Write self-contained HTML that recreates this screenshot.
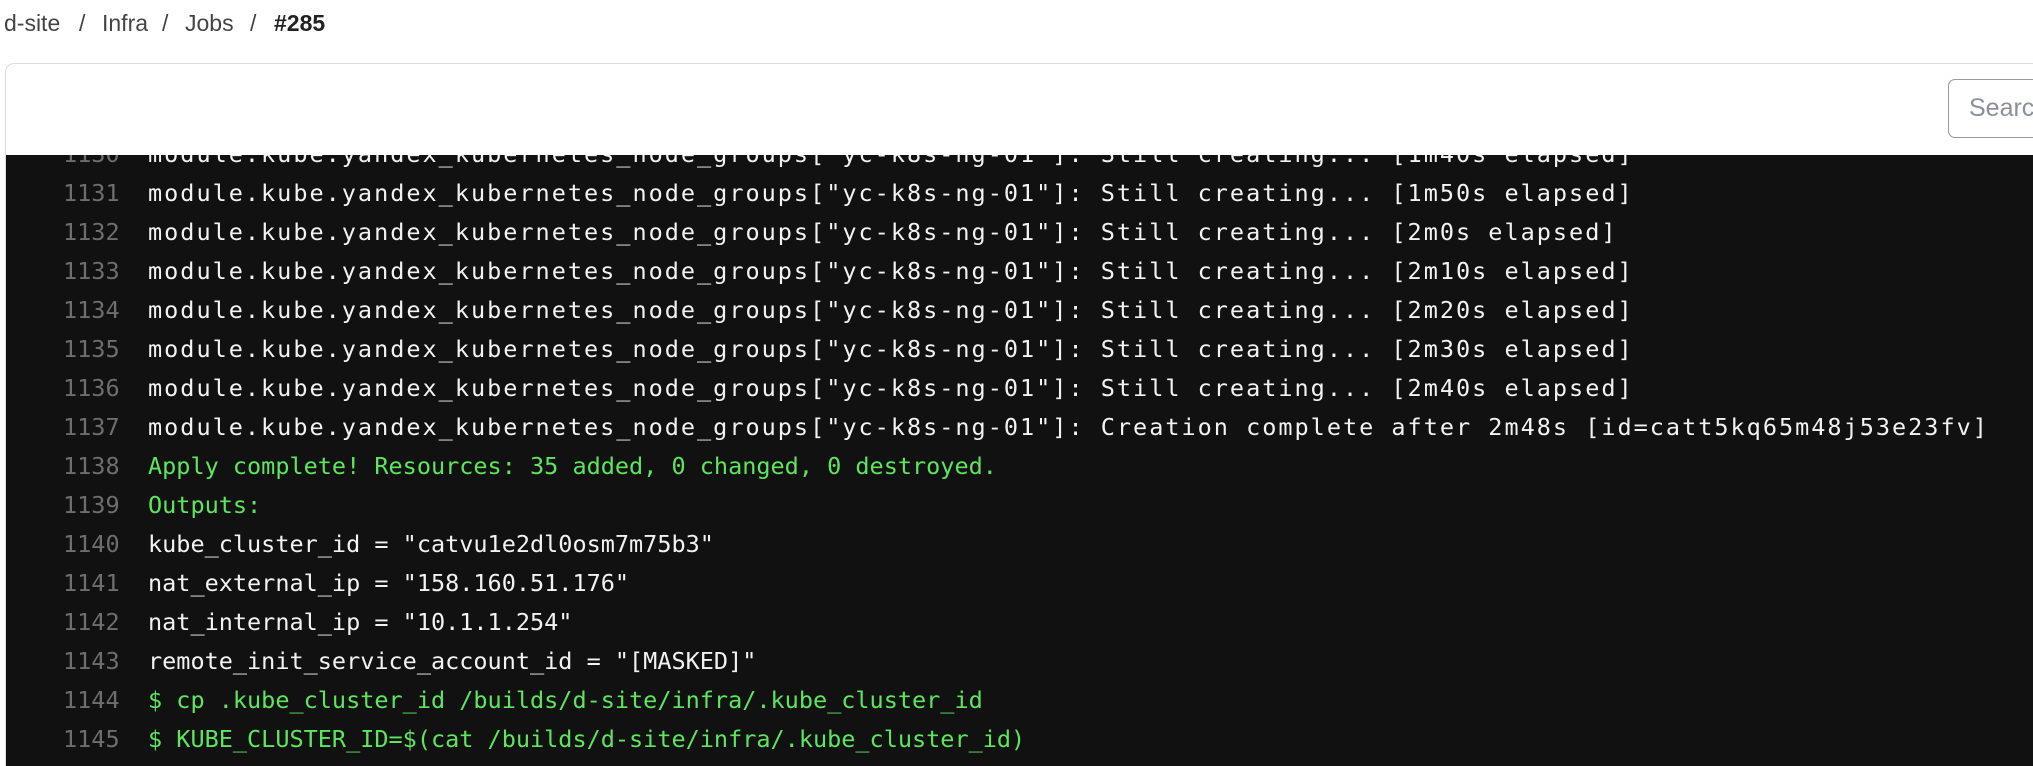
<!DOCTYPE html>
<html><head><meta charset="utf-8"><style>
html,body{margin:0;width:2033px;height:766px;overflow:hidden}
body{background:#fff;font-family:"Liberation Sans",sans-serif;position:relative}
.bc{position:absolute;top:10px;font-size:23px;line-height:26px;color:#444;white-space:pre}
.card{position:absolute;left:5px;top:63px;width:2028px;height:703px;border:1px solid #ddd;border-right:0;border-bottom:0;border-radius:9px 0 0 0;background:#fff;box-sizing:border-box}
.search{position:absolute;left:1948px;top:79px;width:85px;height:59px;border:1.5px solid #999;border-right:0;border-radius:7px 0 0 7px;box-sizing:border-box;font-size:25px;color:#8a8f99;line-height:56px;padding-left:20px;overflow:hidden;white-space:nowrap}
.term{position:absolute;left:6px;top:155px;width:2027px;height:611px;background:#111;overflow:hidden}
.ln{position:absolute;left:0;height:39px;line-height:39px;font-family:"DejaVu Sans Mono",monospace;font-size:23.5px;white-space:pre;color:#f2f2f2}
.ln span.n{display:inline-block;width:56px;margin-left:57px;text-align:right;color:#6e6e6e;margin-right:29px;letter-spacing:0}
.m{letter-spacing:2px}
.g{color:#5de65d}
</style></head><body>
<div class="bc" style="left:4px">d-site</div>
<div class="bc" style="left:79px">/</div>
<div class="bc" style="left:102px">Infra</div>
<div class="bc" style="left:162px">/</div>
<div class="bc" style="left:185px">Jobs</div>
<div class="bc" style="left:250px">/</div>
<div class="bc" style="left:274px;font-weight:bold;color:#222">#285</div>
<div class="card"></div>
<div class="search">Search</div>
<div class="term">
<div class="ln m" style="top:-20px"><span class="n">1130</span>module.kube.yandex_kubernetes_node_groups["yc-k8s-ng-01"]: Still creating... [1m40s elapsed]</div>
<div class="ln m" style="top:19px"><span class="n">1131</span>module.kube.yandex_kubernetes_node_groups["yc-k8s-ng-01"]: Still creating... [1m50s elapsed]</div>
<div class="ln m" style="top:58px"><span class="n">1132</span>module.kube.yandex_kubernetes_node_groups["yc-k8s-ng-01"]: Still creating... [2m0s elapsed]</div>
<div class="ln m" style="top:97px"><span class="n">1133</span>module.kube.yandex_kubernetes_node_groups["yc-k8s-ng-01"]: Still creating... [2m10s elapsed]</div>
<div class="ln m" style="top:136px"><span class="n">1134</span>module.kube.yandex_kubernetes_node_groups["yc-k8s-ng-01"]: Still creating... [2m20s elapsed]</div>
<div class="ln m" style="top:175px"><span class="n">1135</span>module.kube.yandex_kubernetes_node_groups["yc-k8s-ng-01"]: Still creating... [2m30s elapsed]</div>
<div class="ln m" style="top:214px"><span class="n">1136</span>module.kube.yandex_kubernetes_node_groups["yc-k8s-ng-01"]: Still creating... [2m40s elapsed]</div>
<div class="ln m" style="top:253px"><span class="n">1137</span>module.kube.yandex_kubernetes_node_groups["yc-k8s-ng-01"]: Creation complete after 2m48s [id=catt5kq65m48j53e23fv]</div>
<div class="ln g" style="top:292px"><span class="n">1138</span>Apply complete! Resources: 35 added, 0 changed, 0 destroyed.</div>
<div class="ln g" style="top:331px"><span class="n">1139</span>Outputs:</div>
<div class="ln" style="top:370px"><span class="n">1140</span>kube_cluster_id = "catvu1e2dl0osm7m75b3"</div>
<div class="ln" style="top:409px"><span class="n">1141</span>nat_external_ip = "158.160.51.176"</div>
<div class="ln" style="top:448px"><span class="n">1142</span>nat_internal_ip = "10.1.1.254"</div>
<div class="ln" style="top:487px"><span class="n">1143</span>remote_init_service_account_id = "[MASKED]"</div>
<div class="ln g" style="top:526px"><span class="n">1144</span>$ cp .kube_cluster_id /builds/d-site/infra/.kube_cluster_id</div>
<div class="ln g" style="top:565px"><span class="n">1145</span>$ KUBE_CLUSTER_ID=$(cat /builds/d-site/infra/.kube_cluster_id)</div>
</div>
</body></html>
